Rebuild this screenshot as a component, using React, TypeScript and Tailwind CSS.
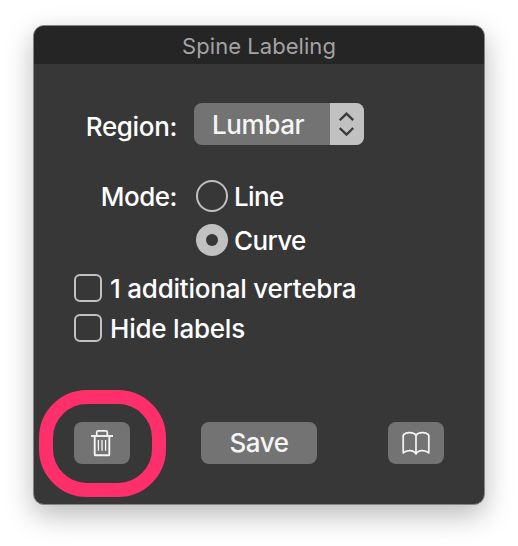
import type { ReactNode } from 'react'

function Radio({ label, checked }: { label: string; checked?: boolean }) {
  return (
    <div className="flex h-8 items-center">
      {checked ? (
        <span className="flex size-8 items-center justify-center rounded-full bg-[#c1c1c1]">
          <span className="size-3 rounded-full bg-[#373737]" />
        </span>
      ) : (
        <span className="size-8 rounded-full border-2 border-[#c1c1c1]" />
      )}
      <span className="ml-[6px] mt-[2px] tracking-[-0.65px]">{label}</span>
    </div>
  )
}

function Checkbox({ label }: { label: string }) {
  return (
    <div className="flex h-7 items-center">
      <span className="size-7 rounded-[6px] border-2 border-[#c1c1c1]" />
      <span className="ml-2 mt-[2px] tracking-[-0.22px]">{label}</span>
    </div>
  )
}

function Button({ children, wide }: { children: ReactNode; wide?: boolean }) {
  return (
    <button className={`flex h-[42px] items-center justify-center rounded-lg bg-[#737373] text-[#f5f5f5] ${wide ? 'w-[116px]' : 'w-14'}`}>
      {children}
    </button>
  )
}

function TrashIcon() {
  return (
    <svg width="22" height="28" viewBox="0 0 22 28" fill="none" stroke="currentColor">
      <path d="M0 7H22" strokeWidth="1.9" />
      <path d="M5.7 6.8V3.4Q5.7 1.9 7.2 1.9H14.8Q16.3 1.9 16.3 3.4V6.8" strokeWidth="1.7" />
      <path d="M3.7 7V25.4Q3.7 26.3 4.6 26.3H17.4Q18.3 26.3 18.3 25.4V7" strokeWidth="1.9" />
      <path d="M7.4 11V21.7M11 11V21.7M14.6 11V21.7" strokeWidth="1.3" />
    </svg>
  )
}

function BookIcon() {
  return (
    <svg width="28" height="26" viewBox="0 0 28 26" fill="none" stroke="currentColor" strokeWidth="1.7" strokeLinejoin="round">
      <path d="M14 24C12 19.8 4.8 19.4 1.2 23V5.2C3.5 1.8 11.5 1.6 14 5.2C16.5 1.6 24.5 1.8 26.8 5.2V23C23.2 19.4 16 19.8 14 24Z" />
      <path d="M14 5V24" />
    </svg>
  )
}

export default function App() {
  return (
    <div className="h-[546px] w-[518px] overflow-hidden bg-white pl-[33px] pt-[25px] font-['Inter',sans-serif]">
      <div className="relative h-[480px] w-[452px] rounded-[11px] border border-[#858585] bg-[#373737] shadow-[0_10px_28px_rgba(0,0,0,0.28)]">
        <div className="flex h-[38px] items-center justify-center rounded-t-[10px] bg-[#252525] pt-[3px] text-[22px] tracking-[0.05px] text-[#a3a3a3]">
          Spine Labeling
        </div>

        <div className="whitespace-nowrap text-[26px] font-medium leading-8 text-white">
          <div className="mt-[39px] flex h-[42px]">
            <span className="mt-2 w-[143px] text-right tracking-[-0.35px]">Region:</span>
            <div className="ml-[17px] flex w-[170px] overflow-hidden rounded-lg bg-[#737373] text-[#f5f5f5]">
              <span className="w-[136px] pl-[18px] pt-[6px] tracking-[-0.4px]">Lumbar</span>
              <span className="flex w-[34px] items-center justify-center bg-[#c1c1c1]">
                <svg width="16" height="26" viewBox="0 0 16 26" fill="none" stroke="#3b3b3b" strokeWidth="2.4">
                  <path d="M0.8 9.2L7.5 2.7L14.2 9.2M0.8 17L7.5 23.5L14.2 17" />
                </svg>
              </span>
            </div>
          </div>

          <div className="mt-[35px] flex">
            <span className="mt-[1px] w-[143px] text-right tracking-[-0.5px]">Mode:</span>
            <div className="ml-[19px] flex flex-col gap-3">
              <Radio label="Line" />
              <Radio label="Curve" checked />
            </div>
          </div>

          <div className="ml-10 mt-[18px] flex flex-col gap-3">
            <Checkbox label="1 additional vertebra" />
            <Checkbox label="Hide labels" />
          </div>

          <div className="ml-10 mt-20 flex w-[370px]">
            <Button><TrashIcon /></Button>
            <div className="ml-[71px] tracking-[-0.5px]"><Button wide>Save</Button></div>
            <div className="ml-[71px]"><Button><BookIcon /></Button></div>
          </div>
        </div>

        {/* highlight around the delete button */}
        <div className="pointer-events-none absolute left-[5px] top-[364px] h-[107px] w-[127px] rounded-[48px] border-14 border-[#ff2f6c]" />
      </div>
    </div>
  )
}
